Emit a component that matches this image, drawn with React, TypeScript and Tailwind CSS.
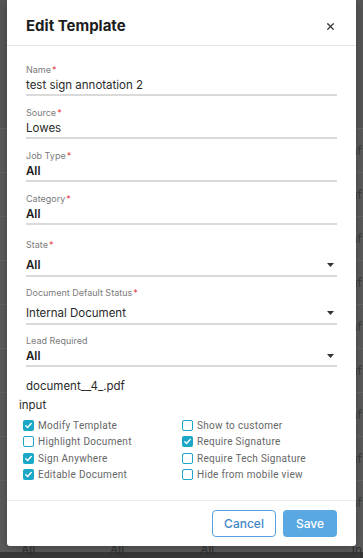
import { X } from 'lucide-react';

type Field = {
  label: string;
  value: string;
  required?: boolean;
  select?: boolean;
  tall?: boolean;
  gap: string;
  bold?: boolean;
};

const FIELDS: Field[] = [
  { label: 'Name', value: 'test sign annotation 2', required: true, gap: 'mt-[18px]' },
  { label: 'Source', value: 'Lowes', required: true, gap: 'mt-[11px]' },
  { label: 'Job Type', value: 'All', required: true, gap: 'mt-[11px]', bold: true },
  { label: 'Category', value: 'All', required: true, gap: 'mt-[11px]', bold: true },
  { label: 'State', value: 'All', required: true, select: true, tall: true, gap: 'mt-[14px]', bold: true },
  { label: 'Document Default Status', value: 'Internal Document', required: true, select: true, tall: true, gap: 'mt-[10px]' },
  { label: 'Lead Required', value: 'All', select: true, gap: 'mt-[10px]', bold: true },
];

const OPTIONS = [
  { label: 'Modify Template', checked: true },
  { label: 'Show to customer', checked: false },
  { label: 'Highlight Document', checked: false },
  { label: 'Require Signature', checked: true },
  { label: 'Sign Anywhere', checked: true },
  { label: 'Require Tech Signature', checked: false },
  { label: 'Editable Document', checked: true },
  { label: 'Hide from mobile view', checked: false },
];

const Caret = () => (
  <svg width="7" height="4" viewBox="0 0 7 4" className="shrink-0 mr-[3px]">
    <path d="M0 0h7L3.5 4z" fill="#333" />
  </svg>
);

const Check = ({ checked }: { checked: boolean }) => (
  <span
    className={
      checked
        ? 'w-[11px] h-[11px] rounded-[2px] bg-[#1ba7c7] flex items-center justify-center shrink-0'
        : 'w-[11px] h-[11px] rounded-[2px] border-[1.5px] border-[#1ba7c7] bg-white shrink-0'
    }
  >
    {checked && (
      <svg width="9" height="9" viewBox="0 0 10 10">
        <path d="M2 5.2l2 2 4-4.4" fill="none" stroke="#fff" strokeWidth="1.6" strokeLinecap="round" strokeLinejoin="round" />
      </svg>
    )}
  </span>
);

const FormField = ({ f }: { f: Field }) => (
  <div className={f.gap}>
    <div className="h-[12px] leading-[12px] text-[9px] text-[#7b7b7b]">
      {f.label}
      {f.required && <span className="text-[#e5393b] ml-[1px]">*</span>}
    </div>
    <div
      className={
        (f.tall ? 'h-[26px] pt-[4px] ' : 'h-[20px] ') +
        'flex items-center justify-between border-b-2 border-[#dadada]'
      }
    >
      <span className={(f.bold ? 'font-semibold text-[#1c1c1c] ' : 'text-[#2a2a2a] ') + 'text-[11.5px] leading-[18px]'}>
        {f.value}
      </span>
      {f.select && <Caret />}
    </div>
  </div>
);

const BackgroundPage = () => (
  <div className="absolute inset-0 bg-[#5a5a5a]">
    <div className="h-[128px] bg-[#565656]" />
    {Array.from({ length: 9 }).map((_, i) => (
      <div key={i} className="h-[44px] border-t border-[#646464] flex items-center justify-end">
        <span className="text-[12px] text-[#3a3a3a] pr-[1px]">nf</span>
      </div>
    ))}
  </div>
);

export default function App() {
  return (
    <div className="relative w-full h-[558px] overflow-hidden" style={{ fontFamily: 'Inter, "Noto Sans", sans-serif' }}>
      <BackgroundPage />

      {/* bottom row of the table under the overlay */}
      <div className="absolute left-0 right-0 top-[546px] h-[6px] bg-[#5a5a5a]" />
      <div className="absolute left-0 right-0 top-[552px] h-[6px] bg-[#373737]" />
      <div className="absolute left-0 right-0 top-[541px] flex text-[12px] text-[#2e2e2e]">
        <span className="ml-[21px]">All</span>
        <span className="ml-[75px]">All</span>
        <span className="ml-[76px]">All</span>
        <span className="ml-auto pr-[1px]">In</span>
      </div>

      <div className="absolute left-[7px] top-0 w-[349px] h-[546px] bg-white rounded-b-[3px] flex flex-col shadow-[0_2px_8px_rgba(0,0,0,0.25)]">
        <div className="h-[46px] shrink-0 flex items-start justify-between pt-[17px] pl-[19px] pr-[20px] border-b border-[#e3e3e3]">
          <h1 className="text-[15px] leading-[18px] font-bold text-[#1d1d1d]">Edit Template</h1>
          <X size={11} strokeWidth={2.6} className="text-[#333] mt-[4px]" />
        </div>

        <div className="flex-1 px-[19px]">
          {FIELDS.map((f) => (
            <FormField key={f.label} f={f} />
          ))}

          <div className="mt-[10px] h-[18px] leading-[18px] text-[11.5px] text-[#2a2a2a]">document__4_.pdf</div>
          <div className="mt-[1px] -ml-[7px] h-[18px] leading-[18px] text-[11.5px] text-[#2a2a2a]">input</div>

          <div
            className="mt-[3px] -ml-[3px] grid grid-cols-[159px_1fr] gap-y-[0.3px]"
            style={{ fontFamily: 'Roboto, "Liberation Sans", sans-serif' }}
          >
            {OPTIONS.map((o) => (
              <label key={o.label} className="h-[16.3px] flex items-center gap-[4px]">
                <Check checked={o.checked} />
                <span className="text-[10px] tracking-[0.3px] text-[#666]">{o.label}</span>
              </label>
            ))}
          </div>
        </div>

        <div className="h-[46px] shrink-0 border-t border-[#ececec] flex items-center justify-end gap-[7px] pr-[19px]">
          <button className="w-[64px] h-[27px] rounded-[4px] border border-[#5b9fdc] text-[#3f86c8] text-[12px] font-medium bg-white">
            Cancel
          </button>
          <button className="w-[54px] h-[27px] rounded-[4px] bg-[#5aa8e2] text-white text-[12px] font-medium">
            Save
          </button>
        </div>
      </div>
    </div>
  );
}
